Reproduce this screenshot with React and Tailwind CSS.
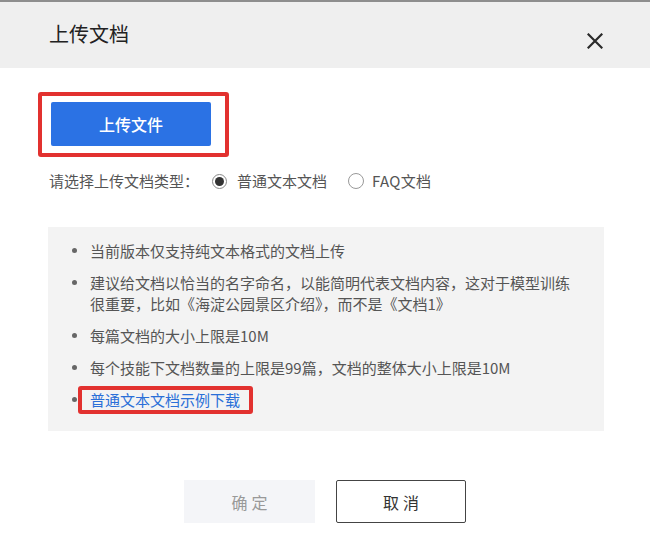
export default function App() {
  const items = [
    "当前版本仅支持纯文本格式的文档上传",
    "建议给文档以恰当的名字命名，以能简明代表文档内容，这对于模型训练很重要，比如《海淀公园景区介绍》，而不是《文档1》",
    "每篇文档的大小上限是10M",
    "每个技能下文档数量的上限是99篇，文档的整体大小上限是10M",
  ];
  return (
    <div className="w-[650px] h-[554px] bg-white font-['Noto_Sans_CJK_SC','Noto_Sans',sans-serif] overflow-hidden">
      <div className="h-[68px] border-t-2 border-[#8e8e8e] bg-[#efefef] flex justify-between items-start">
        <div className="pl-[49px] pt-[19px] text-[20px] leading-[26px] text-[#222]">上传文档</div>
        <svg className="mt-[31px] mr-[47px]" width="16" height="16" viewBox="0 0 16 16">
          <path d="M1.5 1.5 L14.5 14.5 M14.5 1.5 L1.5 14.5" stroke="#2a2a2a" strokeWidth="2.2" strokeLinecap="square" />
        </svg>
      </div>
      <div className="pt-[34px]">
        <div className="ml-[51px] relative w-[160px] h-[44px]">
          <button className="w-[160px] h-[44px] bg-[#2b72e4] rounded-[2px] text-white text-[16px] font-medium">上传文件</button>
          <div className="absolute -left-[13px] -top-[10px] w-[191px] h-[65px] border-[4px] border-[#e2312f] rounded-[3px]"></div>
        </div>
        <div className="mt-[24px] ml-[49px] flex items-center text-[15px] leading-[22px] text-[#555]">
          <span>请选择上传文档类型：</span>
          <span className="ml-[13px] w-[15px] h-[15px] rounded-full border border-[#888] flex items-center justify-center">
            <span className="w-[9px] h-[9px] rounded-full bg-[#333]"></span>
          </span>
          <span className="ml-[10px]">普通文本文档</span>
          <span className="ml-[21px] w-[16px] h-[16px] rounded-full border border-[#999]"></span>
          <span className="ml-[8px] tracking-[0.3px]">FAQ文档</span>
        </div>
        <div className="mt-[35px] ml-[48px] w-[556px] h-[204px] bg-[#f3f3f3] pt-[13px] pl-[24px] pr-[24px] text-[15px] leading-[21px] text-[#555]">
          <div className="flex flex-col gap-[11px]">
            {items.map((t, i) => (
              <div key={i} className="flex items-start">
                <div className="w-[18px] h-[21px] flex items-center shrink-0">
                  <span className="w-[5px] h-[5px] rounded-full bg-[#666]"></span>
                </div>
                <div>{t}</div>
              </div>
            ))}
            <div className="flex items-start">
              <div className="w-[18px] h-[21px] flex items-center shrink-0">
                <span className="w-[5px] h-[5px] rounded-full bg-[#666]"></span>
              </div>
              <span className="relative text-[#2a6fd8]">
                普通文本文档示例下载
                <span className="absolute -left-[12px] -right-[13px] -top-[3px] -bottom-[4px] border-[4px] border-[#e2312f] rounded-[3px]"></span>
              </span>
            </div>
          </div>
        </div>
        <div className="mt-[49px] flex justify-center gap-[21px]">
          <button className="w-[131px] h-[43px] bg-[#f4f5f8] text-[#999] text-[16px] tracking-[4px] pl-[4px]">确定</button>
          <button className="w-[130px] h-[43px] bg-white border-[1.5px] border-[#444] rounded-[2px] text-[#333] text-[16px] tracking-[4px] pl-[4px]">取消</button>
        </div>
      </div>
    </div>
  );
}
